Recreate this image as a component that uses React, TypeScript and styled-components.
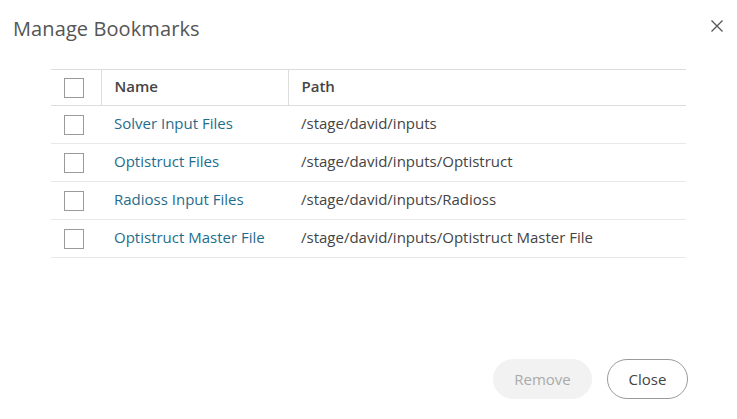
import React from "react";
import styled, { createGlobalStyle } from "styled-components";

const Global = createGlobalStyle`
  html, body { margin: 0; padding: 0; background: #fff; }
  body { font-family: "Open Sans", "Noto Sans", sans-serif; }
  * { box-sizing: border-box; }
`;

const Dialog = styled.div`
  width: 737px;
  height: 419px;
  display: flex;
  flex-direction: column;
  background: #fff;
`;

const Header = styled.div`
  display: flex;
  align-items: center;
  justify-content: space-between;
  height: 58px;
  padding: 0 10px 0 13px;
`;

const Title = styled.h1`
  margin: 0;
  font-size: 20px;
  font-weight: 400;
  color: #555;
  line-height: 1;
  letter-spacing: 0.1px;
`;

const CloseX = styled.button`
  width: 20px;
  height: 20px;
  padding: 0;
  border: 0;
  background: transparent;
  display: flex;
  align-items: center;
  justify-content: center;
  cursor: pointer;
  margin-top: -6px;
`;

const Body = styled.div`
  flex: 1;
  padding: 11px 51px 0 51px;
`;

const Table = styled.table`
  width: 635px;
  border-collapse: collapse;
  table-layout: fixed;
  border-top: 1px solid #dcdcdc;
`;

const HeadCell = styled.th<{ $sep?: boolean }>`
  height: 36px;
  padding: 0 0 ${(p) => (p.$sep ? "4px" : "0")} 13px;
  text-align: left;
  font-size: 15px;
  font-weight: 600;
  color: #444;
  border-bottom: 1px solid #dcdcdc;
  border-left: ${(p) => (p.$sep ? "1px solid #dcdcdc" : "none")};
`;

const Row = styled.tr`
  height: 38px;
  border-bottom: 1px solid #e8e8e8;
`;

const Cell = styled.td<{ $link?: boolean; $text?: boolean }>`
  padding: 0 0 ${(p) => (p.$text ? "4px" : "0")} 13px;
  font-size: 15px;
  color: ${(p) => (p.$link ? "#1f6d8c" : "#444")};
  white-space: nowrap;
`;

const Box = styled.span`
  display: block;
  width: 20px;
  height: 20px;
  border: 1px solid #9a9a9a;
  background: #fff;
`;

const Footer = styled.div`
  display: flex;
  justify-content: flex-end;
  gap: 15px;
  padding: 0 49px 20px 0;
`;

const Button = styled.button<{ $disabled?: boolean }>`
  height: 40px;
  border-radius: 20px;
  font-family: "Open Sans", "Noto Sans", sans-serif;
  font-size: 15px;
  padding: 0;
  width: ${(p) => (p.$disabled ? "99px" : "81px")};
  background: ${(p) => (p.$disabled ? "#f2f2f2" : "#fff")};
  color: ${(p) => (p.$disabled ? "#aaa" : "#444")};
  border: ${(p) => (p.$disabled ? "1px solid #f2f2f2" : "1px solid #9a9a9a")};
`;

const rows = [
  { name: "Solver Input Files", path: "/stage/david/inputs" },
  { name: "Optistruct Files", path: "/stage/david/inputs/Optistruct" },
  { name: "Radioss Input Files", path: "/stage/david/inputs/Radioss" },
  { name: "Optistruct Master File", path: "/stage/david/inputs/Optistruct Master File" },
];

export default function App() {
  return (
    <>
      <Global />
      <Dialog>
        <Header>
          <Title>Manage Bookmarks</Title>
          <CloseX aria-label="Close">
            <svg width="12" height="12" viewBox="0 0 12 12">
              <path d="M0.5 0.5 L11.5 11.5 M11.5 0.5 L0.5 11.5" stroke="#555" strokeWidth="1.3" fill="none" />
            </svg>
          </CloseX>
        </Header>
        <Body>
          <Table>
            <colgroup>
              <col style={{ width: 50 }} />
              <col style={{ width: 187 }} />
              <col />
            </colgroup>
            <thead>
              <tr>
                <HeadCell><Box /></HeadCell>
                <HeadCell $sep>Name</HeadCell>
                <HeadCell $sep>Path</HeadCell>
              </tr>
            </thead>
            <tbody>
              {rows.map((r) => (
                <Row key={r.name}>
                  <Cell><Box /></Cell>
                  <Cell $link $text>{r.name}</Cell>
                  <Cell $text>{r.path}</Cell>
                </Row>
              ))}
            </tbody>
          </Table>
        </Body>
        <Footer>
          <Button $disabled>Remove</Button>
          <Button>Close</Button>
        </Footer>
      </Dialog>
    </>
  );
}
